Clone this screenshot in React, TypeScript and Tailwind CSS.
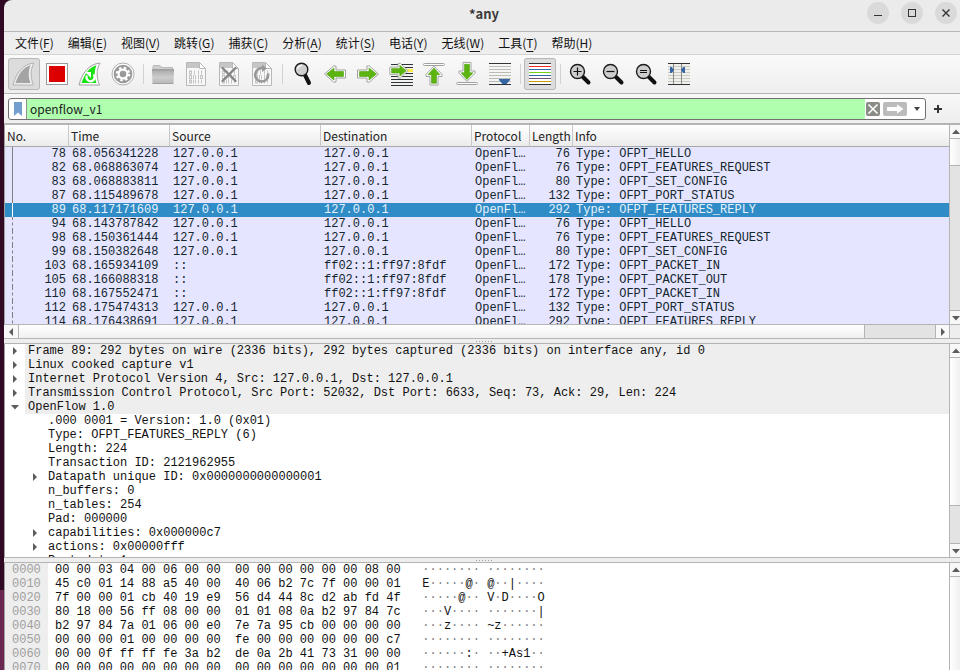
import React from 'react';
import clsx from 'clsx';

const uiFont = "font-['Noto_Sans_CJK_SC','Noto_Sans',sans-serif]";
const monoFont = "font-['Liberation_Mono',monospace]";

const menus = [
  { label: '文件', accel: 'F' },
  { label: '编辑', accel: 'E' },
  { label: '视图', accel: 'V' },
  { label: '跳转', accel: 'G' },
  { label: '捕获', accel: 'C' },
  { label: '分析', accel: 'A' },
  { label: '统计', accel: 'S' },
  { label: '电话', accel: 'Y' },
  { label: '无线', accel: 'W' },
  { label: '工具', accel: 'T' },
  { label: '帮助', accel: 'H' },
];

const packets = [
  { no: 78, time: '68.056341228', src: '127.0.0.1', dst: '127.0.0.1', len: 76, info: 'OFPT_HELLO' },
  { no: 82, time: '68.068863074', src: '127.0.0.1', dst: '127.0.0.1', len: 76, info: 'OFPT_FEATURES_REQUEST' },
  { no: 83, time: '68.068883811', src: '127.0.0.1', dst: '127.0.0.1', len: 80, info: 'OFPT_SET_CONFIG' },
  { no: 87, time: '68.115489678', src: '127.0.0.1', dst: '127.0.0.1', len: 132, info: 'OFPT_PORT_STATUS' },
  { no: 89, time: '68.117171609', src: '127.0.0.1', dst: '127.0.0.1', len: 292, info: 'OFPT_FEATURES_REPLY' },
  { no: 94, time: '68.143787842', src: '127.0.0.1', dst: '127.0.0.1', len: 76, info: 'OFPT_HELLO' },
  { no: 98, time: '68.150361444', src: '127.0.0.1', dst: '127.0.0.1', len: 76, info: 'OFPT_FEATURES_REQUEST' },
  { no: 99, time: '68.150382648', src: '127.0.0.1', dst: '127.0.0.1', len: 80, info: 'OFPT_SET_CONFIG' },
  { no: 103, time: '68.165934109', src: '::', dst: 'ff02::1:ff97:8fdf', len: 172, info: 'OFPT_PACKET_IN' },
  { no: 105, time: '68.166088318', src: '::', dst: 'ff02::1:ff97:8fdf', len: 178, info: 'OFPT_PACKET_OUT' },
  { no: 110, time: '68.167552471', src: '::', dst: 'ff02::1:ff97:8fdf', len: 172, info: 'OFPT_PACKET_IN' },
  { no: 112, time: '68.175474313', src: '127.0.0.1', dst: '127.0.0.1', len: 132, info: 'OFPT_PORT_STATUS' },
  { no: 114, time: '68.176438691', src: '127.0.0.1', dst: '127.0.0.1', len: 292, info: 'OFPT_FEATURES_REPLY' },
];
const selectedNo = 89;

const columns = [
  { name: 'No.', width: 'w-[64px]' },
  { name: 'Time', width: 'w-[101px]' },
  { name: 'Source', width: 'w-[151px]' },
  { name: 'Destination', width: 'w-[151px]' },
  { name: 'Protocol', width: 'w-[58px]' },
  { name: 'Length', width: 'w-[43px]' },
  { name: 'Info', width: '' },
];

const layers = [
  { text: 'Frame 89: 292 bytes on wire (2336 bits), 292 bytes captured (2336 bits) on interface any, id 0', open: false },
  { text: 'Linux cooked capture v1', open: false },
  { text: 'Internet Protocol Version 4, Src: 127.0.0.1, Dst: 127.0.0.1', open: false },
  { text: 'Transmission Control Protocol, Src Port: 52032, Dst Port: 6633, Seq: 73, Ack: 29, Len: 224', open: false },
  { text: 'OpenFlow 1.0', open: true },
];

const fields = [
  { text: '.000 0001 = Version: 1.0 (0x01)' },
  { text: 'Type: OFPT_FEATURES_REPLY (6)' },
  { text: 'Length: 224' },
  { text: 'Transaction ID: 2121962955' },
  { text: 'Datapath unique ID: 0x0000000000000001', expandable: true },
  { text: 'n_buffers: 0' },
  { text: 'n_tables: 254' },
  { text: 'Pad: 000000' },
  { text: 'capabilities: 0x000000c7', expandable: true },
  { text: 'actions: 0x00000fff', expandable: true },
  { text: 'Port data 1', expandable: true },
];

const hexRows = [
  '00 00 03 04 00 06 00 00 00 00 00 00 00 00 08 00',
  '45 c0 01 14 88 a5 40 00 40 06 b2 7c 7f 00 00 01',
  '7f 00 00 01 cb 40 19 e9 56 d4 44 8c d2 ab fd 4f',
  '80 18 00 56 ff 08 00 00 01 01 08 0a b2 97 84 7c',
  'b2 97 84 7a 01 06 00 e0 7e 7a 95 cb 00 00 00 00',
  '00 00 00 01 00 00 00 00 fe 00 00 00 00 00 00 c7',
  '00 00 0f ff ff fe 3a b2 de 0a 2b 41 73 31 00 00',
  '00 00 00 00 00 00 00 00 00 00 00 00 00 00 00 01',
];

/* ---------- toolbar icons, all on a 32px grid ---------- */

const Svg = ({ children }: { children: React.ReactNode }) => (
  <svg viewBox="0 0 32 32" className="block h-8 w-8 shrink-0" aria-hidden="true">{children}</svg>
);

const FIN = 'M5 27 C8 15 15 6 26 5 C22 12 22.500 20 25.500 27 Z';
const FIN_INNER = 'M7.500 25 C10.500 16 15.500 9 22.500 7.300 C20 13 20.300 19.500 22.500 25 Z';

const StartIcon = () => (
  <Svg>
    <path d={FIN} fill="#ededed" stroke="#b4b4b4" />
    <path d={FIN_INNER} fill="#a4a4a4" />
  </Svg>
);

const StopIcon = () => (
  <Svg>
    <rect x="5.5" y="5.5" width="21" height="21" fill="#fff" stroke="#9a9a9a" />
    <rect x="8" y="8" width="16" height="16" fill="#dd0000" />
  </Svg>
);

const RestartIcon = () => (
  <Svg>
    <path d={FIN} fill="#fff" stroke="#a0a0a0" />
    <path d={FIN_INNER} fill="#17e311" />
    <path d="M13 17.500 A4 4 0 1 0 19.500 16.500" fill="none" stroke="#fff" strokeWidth="2.2" />
    <path d="M11 14 H17 V20 Z" fill="#fff" />
  </Svg>
);

const OptionsIcon = () => (
  <Svg>
    <circle cx="16" cy="16" r="11" fill="#fff" stroke="#b0b0b0" />
    <circle cx="16" cy="16" r="9.3" fill="#9a9a9a" />
    <circle cx="16" cy="16" r="4.400" fill="none" stroke="#fff" strokeWidth="2.2" />
    <circle cx="16" cy="16" r="6.300" fill="none" stroke="#fff" strokeWidth="2" strokeDasharray="2.475 2.475" />
  </Svg>
);

const FolderIcon = () => (
  <Svg>
    <defs>
      <linearGradient id="folder" x1="0" y1="0" x2="0" y2="1">
        <stop offset="0" stopColor="#b0b0b0" />
        <stop offset="0.5" stopColor="#cccccc" />
        <stop offset="1" stopColor="#b8b8b8" />
      </linearGradient>
    </defs>
    <path d="M6 13 V8.500 Q6 7.500 7 7.500 H13 L15 9.500 H25.500 V13 Z" fill="#cecece" stroke="#bababa" />
    <rect x="5" y="11" width="22" height="2" fill="#a2a2a2" />
    <path d="M5 13 H27 L26.500 25.500 H5.500 Z" fill="url(#folder)" />
    <path d="M5.500 25.500 H26.500" stroke="#a0a0a0" />
  </Svg>
);

const FileIcon = ({ mark }: { mark?: 'close' | 'reload' }) => (
  <Svg>
    <path d="M6.500 4.500 H19.500 L25.500 10.500 V27.500 H6.500 Z" fill="#f8f8f8" stroke="#b8b8b8" />
    <path d="M7 5 H19 V10 H7 Z" fill="#c6c6c6" />
    <path d="M19.500 4.500 V10.500 H25.500 Z" fill="#fff" stroke="#b8b8b8" />
    <g fill="none" stroke="#c4c4c4" strokeWidth="1">
      {[13, 17.500, 22].map((y, i) => (
        <g key={y}>
          <rect x="9.500" y={y} width="2" height="3" />
          {i === 0 ? <path d={`M14.500 ${y - 0.500} v4`} /> : <path d={`M13.500 ${y - 0.500} v4 M15.500 ${y - 0.500} v4`} />}
          <path d={`M18.500 ${y - 0.500} v4`} />
          {i === 1 ? <rect x="20.500" y={y} width="2" height="3" /> : <path d={`M21.500 ${y - 0.500} v4`} />}
        </g>
      ))}
    </g>
    {mark === 'close' && <path d="M9.500 10 L22.500 23 M22.500 10 L9.500 23" stroke="#858585" strokeWidth="2.4" strokeLinecap="round" />}
    {mark === 'reload' && (
      <>
        <path d="M10.500 13 A6.500 6.500 0 1 0 22 15.500" fill="none" stroke="#989898" strokeWidth="2.5" />
        <path d="M10.500 13 A6.500 6.500 0 0 1 17 10" fill="none" stroke="#989898" strokeWidth="2.5" />
        <path d="M16 6.500 L21 10.500 L16 14 Z" fill="#989898" />
      </>
    )}
  </Svg>
);

const FindIcon = () => (
  <Svg>
    <path d="M19 17 L23 25" stroke="#111" strokeWidth="4" strokeLinecap="round" />
    <circle cx="15.500" cy="11.500" r="6.300" fill="#cfcfcf" stroke="#1c1c1c" strokeWidth="1.400" />
    <path d="M11.500 11 A4 4 0 0 1 16 7.500" fill="none" stroke="#f4f4f4" strokeWidth="1.600" />
  </Svg>
);

const ZoomIcon = ({ sign }: { sign: '+' | '-' | '=' }) => (
  <Svg>
    <path d="M19 19 L24.500 24.500" stroke="#111" strokeWidth="4" strokeLinecap="round" />
    <circle cx="13.500" cy="13.500" r="7" fill="#cdcdcd" stroke="#1c1c1c" strokeWidth="1.400" />
    {sign === '+' && <path d="M9.500 13.500 H17.500 M13.500 9.500 V17.500" stroke="#111" strokeWidth="1.200" />}
    {sign === '-' && <path d="M9.500 13.500 H17.500" stroke="#111" strokeWidth="1.200" />}
    {sign === '=' && <path d="M10 12.500 H17 M10 14.500 H17" stroke="#111" strokeWidth="1" />}
  </Svg>
);

const GreenArrow = ({ transform }: { transform?: string }) => (
  <g transform={transform}>
    <path d="M5.500 12 H15 V8 H17.500 L26.500 16 L17.500 24 H15 V20 H5.500 Z" fill="#fff" stroke="#a0a0a0" strokeLinejoin="round" />
    <path d="M7.500 13.500 H17 V10 L24.500 16 L17 22 V18.500 H7.500 Z" fill="#5cb411" stroke="#4da00c" strokeWidth="0.600" />
  </g>
);

const BackIcon = () => <Svg><GreenArrow transform="rotate(180 16 16)" /></Svg>;
const ForwardIcon = () => <Svg><GreenArrow /></Svg>;

const GotoIcon = () => (
  <Svg>
    <rect x="20" y="11" width="8" height="3" fill="#fce94f" />
    <path d="M6 6.500 H28 M6 9.500 H28 M6 15.500 H28 M6 18.500 H28 M6 21.500 H28 M6 24.500 H28 M6 27.500 H28" stroke="#2e3436" strokeWidth="1" />
    <GreenArrow transform="translate(0 -2) scale(0.870 0.920)" />
  </Svg>
);

const FirstIcon = () => (
  <Svg>
    <rect x="5.500" y="5.500" width="21" height="2" rx="1" fill="#fff" stroke="#a0a0a0" />
    <GreenArrow transform="rotate(-90 16 16) scale(0.900 1)" />
  </Svg>
);

const LastIcon = () => (
  <Svg>
    <rect x="5.500" y="24.500" width="21" height="2" rx="1" fill="#fff" stroke="#a0a0a0" />
    <GreenArrow transform="translate(0 -0.500) rotate(90 16 16) scale(0.900 1)" />
  </Svg>
);

const AutoScrollIcon = () => (
  <Svg>
    <path d="M5 5.500 H27 M5 26.500 H27" stroke="#2e3436" />
    <path d="M5 8.500 H27 M5 11.500 H27 M5 14.500 H27 M5 17.500 H27 M5 20.500 H27 M5 23.500 H27" stroke="#babdb6" />
    <path d="M15 21 H26 V22 L22.500 26 H18.500 L15 22 Z" fill="#3465a4" />
  </Svg>
);

const rainbow = ['#2e3436', '#ef2929', '#3465a4', '#73d216', '#3465a4', '#75507b', '#c4a000', '#2e3436'];

const ColorizeIcon = () => (
  <Svg>
    <rect x="5" y="5" width="22" height="22" fill="#fff" />
    {rainbow.map((c, i) => <path key={i} d={`M5 ${5.500 + i * 3} H27`} stroke={c} />)}
  </Svg>
);

const ResizeIcon = () => (
  <Svg>
    <rect x="5" y="5" width="22" height="22" fill="#f0f0ec" />
    <path d="M5 5.500 H27 M5 26.500 H27" stroke="#2e3436" />
    <path d="M5 8.500 H27 M5 11.500 H27 M5 14.500 H27 M5 17.500 H27 M5 20.500 H27 M5 23.500 H27" stroke="#c8cac4" />
    <path d="M10.500 6 V26 M18.500 6 V26" stroke="#888a85" />
    <path d="M7 9 H8.500 L10.500 11 V13 L8.500 15 H7 Z M22 9 H20.500 L18.500 11 V13 L20.500 15 H22 Z" fill="#3465a4" />
  </Svg>
);

const toolGroups = [
  [
    { title: 'Start', icon: <StartIcon />, checked: true },
    { title: 'Stop', icon: <StopIcon /> },
    { title: 'Restart', icon: <RestartIcon /> },
    { title: 'Options', icon: <OptionsIcon /> },
  ],
  [
    { title: 'Open', icon: <FolderIcon /> },
    { title: 'Save', icon: <FileIcon /> },
    { title: 'Close', icon: <FileIcon mark="close" /> },
    { title: 'Reload', icon: <FileIcon mark="reload" /> },
  ],
  [
    { title: 'Find', icon: <FindIcon /> },
    { title: 'Back', icon: <BackIcon /> },
    { title: 'Forward', icon: <ForwardIcon /> },
    { title: 'Go to packet', icon: <GotoIcon /> },
    { title: 'First packet', icon: <FirstIcon /> },
    { title: 'Last packet', icon: <LastIcon /> },
    { title: 'Auto scroll', icon: <AutoScrollIcon /> },
  ],
  [{ title: 'Colorize', icon: <ColorizeIcon />, checked: true }],
  [
    { title: 'Zoom in', icon: <ZoomIcon sign="+" /> },
    { title: 'Zoom out', icon: <ZoomIcon sign="-" /> },
    { title: 'Normal size', icon: <ZoomIcon sign="=" /> },
    { title: 'Resize columns', icon: <ResizeIcon /> },
  ],
];

/* ---------- small pieces ---------- */

const arrowPaths = {
  up: 'M0 6 L4 1.500 L8 6 Z',
  down: 'M0 2 L4 6.500 L8 2 Z',
  left: 'M6 0 L2 4 L6 8 Z',
  right: 'M2 0 L6 4 L2 8 Z',
};

const Arrow = ({ dir }: { dir: keyof typeof arrowPaths }) => (
  <svg viewBox="0 0 8 8" className="block h-2 w-2 shrink-0" aria-hidden="true"><path d={arrowPaths[dir]} fill="#5c5c5c" /></svg>
);

interface VScrollProps {
  thumb: string;
  track?: string;
}

const VScroll: React.FC<VScrollProps> = ({ thumb, track }) => (
  <div className="flex w-[11px] shrink-0 flex-col overflow-hidden border-l border-[#b4b4b4] bg-[#e3e3e3]">
    <button aria-label="Scroll up" className="flex h-[14px] w-3 shrink-0 items-center justify-center border-b border-[#b4b4b4] bg-[#f8f8f8]"><Arrow dir="up" /></button>
    <div className={clsx('bg-linear-to-r from-white to-[#f0f0f0]', thumb)} />
    {track && (
      <>
        <div className={clsx('border-t border-[#b4b4b4]', track)} />
        <button aria-label="Scroll down" className="flex h-[14px] w-3 shrink-0 items-center justify-center border-t border-[#b4b4b4] bg-[#f8f8f8]"><Arrow dir="down" /></button>
      </>
    )}
  </div>
);

const HScroll = () => (
  <div className="flex h-[14px] shrink-0 border-t border-[#b4b4b4] bg-[#e3e3e3]">
    <button aria-label="Scroll left" className="flex w-[15px] shrink-0 items-center justify-center border-r border-[#b4b4b4] bg-[#f8f8f8]"><Arrow dir="left" /></button>
    <div className="grow-12 border-r border-[#b4b4b4] bg-linear-to-b from-white to-[#f0f0f0]" />
    <div className="grow" />
    <button aria-label="Scroll right" className="flex w-[14px] shrink-0 items-center justify-center border-l border-[#b4b4b4] bg-[#f8f8f8]"><Arrow dir="right" /></button>
    <div className="w-[11px] shrink-0 border-l border-[#b4b4b4] bg-[#eeeeee]" />
  </div>
);

const Splitter = () => (
  <div className="flex h-1 shrink-0 items-center justify-center gap-0.5 bg-[#eeeeee] pl-1">
    {[0, 1, 2, 3, 4, 5].map(i => <span key={i} className="h-px w-px bg-[#a0a0a0]" />)}
  </div>
);

const TitleBar = () => (
  <header className="relative flex h-8 shrink-0 items-center justify-center rounded-tl-lg border-b border-[#b8b8b8] bg-[#ebebeb] pl-1">
    <h1 className="pb-1 text-[13px] font-bold text-[#3a3a3a]">*any</h1>
    <div className="absolute top-0.5 right-[3px] flex gap-3">
      <button aria-label="Minimize" className="h-[22px] w-[22px] rounded-full bg-[#dadada]">
        <svg viewBox="0 0 22 22"><path d="M7 13.500 H15" stroke="#333" /></svg>
      </button>
      <button aria-label="Maximize" className="h-[22px] w-[22px] rounded-full bg-[#dadada]">
        <svg viewBox="0 0 22 22"><rect x="7.500" y="7.500" width="7" height="7" fill="none" stroke="#333" /></svg>
      </button>
      <button aria-label="Close window" className="h-[22px] w-[22px] rounded-full bg-[#dadada]">
        <svg viewBox="0 0 22 22"><path d="M7.500 7.500 L14.500 14.500 M14.500 7.500 L7.500 14.500" stroke="#333" strokeWidth="1.400" /></svg>
      </button>
    </div>
  </header>
);

const MenuBar = () => (
  <nav className="flex h-[23px] shrink-0 items-center gap-[14px] border-b border-[#d4d4d4] bg-[#eeeeee] pl-[11px] text-[12px] leading-4 text-[#111]">
    {menus.map(m => (
      <button key={m.label} className="whitespace-nowrap">
        {m.label}(<span className="underline underline-offset-3">{m.accel}</span>)
      </button>
    ))}
  </nav>
);

const ToolBar = () => (
  <div className="flex h-[39px] shrink-0 items-center gap-px border-b border-[#b4b4b4] bg-linear-to-b from-[#fafafa] to-[#eeeeee] pl-1">
    {toolGroups.map((group, g) => (
      <React.Fragment key={g}>
        {g > 0 && <div className="flex h-5 w-1.5 shrink-0 justify-center"><span className="w-px bg-[#d2d2d2]" /></div>}
        {group.map(tool => (
          <button
            key={tool.title}
            aria-label={tool.title}
            className={clsx('h-8 w-8 shrink-0 rounded-[3px]', tool.checked && 'bg-[#dcdcdc] outline -outline-offset-1 outline-[#b8b8b8]')}
          >
            {tool.icon}
          </button>
        ))}
      </React.Fragment>
    ))}
  </div>
);

const FilterBar = () => (
  <div className="flex h-[29px] shrink-0 items-center bg-linear-to-b from-[#f8f8f8] to-[#eeeeee] pt-px pr-[18px] pl-1">
    <div className="flex h-[22px] grow items-stretch overflow-hidden rounded-[3px] border border-[#707070] bg-white">
      <button aria-label="Filter bookmarks" className="flex w-[18px] shrink-0 items-center justify-center border-r border-[#909090]">
        <svg viewBox="0 0 8 14" className="h-[14px] w-2"><path d="M0 0 H8 V14 L4 10.500 L0 14 Z" fill="#729fcf" /></svg>
      </button>
      <input aria-label="Display filter" defaultValue="openflow_v1" className="min-w-0 grow bg-[#afffaf] pl-[3px] text-[12px] text-[#222] outline-none" />
      <div className="flex shrink-0 items-center gap-[3px] px-px">
        <button aria-label="Clear filter" className="h-[14px] w-[14px] rounded-xs bg-[#8a8c86]">
          <svg viewBox="0 0 14 14"><path d="M2.500 2.500 L11.500 11.500 M11.500 2.500 L2.500 11.500" stroke="#fff" strokeWidth="1.600" /></svg>
        </button>
        <button aria-label="Apply filter" className="h-[14px] w-6 rounded-xs bg-[#bcbcbc]">
          <svg viewBox="0 0 24 14"><path d="M4 5 H14 V2.500 L20.500 7 L14 11.500 V9 H4 Z" fill="#fff" /></svg>
        </button>
        <button aria-label="Recent filters" className="flex w-[14px] items-center justify-center">
          <svg viewBox="0 0 6 4" className="h-1 w-1.5"><path d="M0 0 H6 L3 4 Z" fill="#444" /></svg>
        </button>
      </div>
    </div>
    <button aria-label="Add filter button" className="ml-2 h-2 w-2">
      <svg viewBox="0 0 8 8"><path d="M4 0 V8 M0 4 H8" stroke="#333" strokeWidth="2" /></svg>
    </button>
  </div>
);

const PacketList = () => (
  <section className="flex min-h-0 flex-2 flex-col border-t-2 border-b border-[#b4b4b4]">
    <div className="flex min-h-0 grow">
      <div className="min-w-0 grow overflow-hidden border-l border-[#a0a0a0] bg-[#e6e5ff]">
        <table className="w-full table-fixed border-separate border-spacing-0">
          <thead>
            <tr>
              {columns.map(c => (
                <th
                  key={c.name}
                  className={clsx('h-[22px] border-b border-[#a8a8a8] bg-linear-to-b from-white to-[#ebebeb] p-0 pl-0.5 text-left text-[12px] leading-5 font-normal whitespace-nowrap text-[#222]', c.width, c.name !== 'Info' && 'border-r border-r-[#c8c8c8]')}
                >
                  {c.name}
                </th>
              ))}
            </tr>
          </thead>
          <tbody className={clsx(monoFont, 'text-[12px] leading-[14px] whitespace-nowrap')}>
            {packets.map(p => (
              <tr key={p.no} className={p.no === selectedNo ? 'bg-[#308cc6] text-[#e6f2fb]' : 'text-[#12272e]'}>
                <td className="p-0 pr-[3px] text-right">
                  <span
                    className={clsx(
                      'float-left ml-[7px] h-[14px] border-l',
                      p.no < selectedNo && 'border-[#808080]',
                      p.no === selectedNo && 'border-white',
                      p.no > selectedNo && 'border-dashed border-[#808080]',
                    )}
                  />
                  {p.no}
                </td>
                <td className="p-0 pl-[3px]">{p.time}</td>
                <td className="p-0 pl-[3px]">{p.src}</td>
                <td className="p-0 pl-[3px]">{p.dst}</td>
                <td className="p-0 pl-[3px]">OpenFl…</td>
                <td className="p-0 pr-[3px] text-right">{p.len}</td>
                <td className="p-0 pl-[3px]">Type: {p.info}</td>
              </tr>
            ))}
          </tbody>
        </table>
      </div>
      <VScroll thumb="h-[26px] shrink-0" track="grow" />
    </div>
    <HScroll />
  </section>
);

const PacketDetails = () => (
  <section className="flex min-h-0 flex-2 border-y border-[#b4b4b4]">
    <ul className={clsx(monoFont, 'min-w-0 grow overflow-hidden border-l border-[#a0a0a0] bg-white text-[12px] leading-[14px] whitespace-pre text-[#111]')}>
      {layers.map(l => (
        <li key={l.text} className="flex h-[14px]">
          <span className="flex w-5 shrink-0 items-center justify-center"><Arrow dir={l.open ? 'down' : 'right'} /></span>
          <span className="grow bg-[#eeeeee] pl-[3px]">{l.text}</span>
        </li>
      ))}
      {fields.map(f => (
        <li key={f.text} className="flex h-[14px] pl-5">
          <span className="flex w-5 shrink-0 items-center justify-center">{f.expandable && <Arrow dir="right" />}</span>
          <span className="pl-[3px]">{f.text}</span>
        </li>
      ))}
    </ul>
    <VScroll thumb="grow-[147]" track="grow-[38]" />
  </section>
);

const toAscii = (byte: string) => {
  const code = parseInt(byte, 16);
  return code > 32 && code < 127 ? String.fromCharCode(code) : '·';
};

const PacketBytes = () => (
  <section className="flex min-h-0 flex-1 border-t border-[#b4b4b4]">
    <div className={clsx(monoFont, 'min-w-0 grow overflow-hidden border-l border-[#a0a0a0] bg-white text-[12px] leading-[14px] whitespace-pre text-[#111]')}>
      {hexRows.map((row, r) => {
        const bytes = row.split(' ');
        return (
          <div key={r} className="flex h-[14px]">
            <span className="w-[43px] shrink-0 bg-[#eeeeee] pl-[7px] text-[#a0a0a0]">{(r * 16).toString(16).padStart(4, '0')}</span>
            <span className="pl-[7px]">{bytes.slice(0, 8).join(' ')}{'  '}{bytes.slice(8).join(' ')}{'   '}</span>
            <span>
              {bytes.map((b, i) => {
                const ch = toAscii(b);
                return <span key={i} className={ch === '·' ? 'text-[#808080]' : ''}>{i === 8 ? ' ' : ''}{ch}</span>;
              })}
            </span>
          </div>
        );
      })}
    </div>
    <VScroll thumb="grow" />
  </section>
);

const App: React.FC = () => (
  <div className={clsx(uiFont, 'flex h-screen overflow-hidden bg-[#300a24]')}>
    {/* strip of the desktop behind the window */}
    <div className="flex w-1 shrink-0 flex-col overflow-hidden">
      <div className="grow bg-[#300a24]" />
      <div className="h-20 bg-[#6b2750]" />
    </div>
    <main className="flex min-w-0 grow flex-col">
      <TitleBar />
      <MenuBar />
      <ToolBar />
      <FilterBar />
      <PacketList />
      <Splitter />
      <PacketDetails />
      <Splitter />
      <PacketBytes />
    </main>
  </div>
);

export default App;
